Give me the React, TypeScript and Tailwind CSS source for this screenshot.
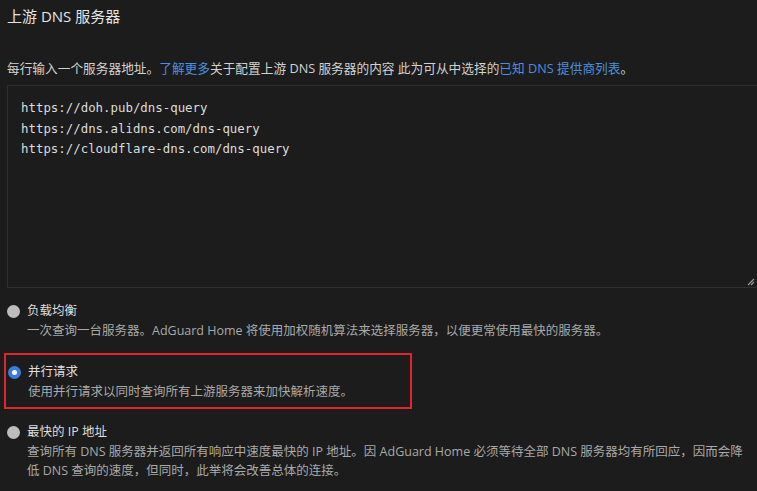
import React from "react";

const sans = { fontFamily: "'Open Sans','Noto Sans CJK SC',sans-serif" };

function Radio({ checked }: { checked?: boolean }) {
  if (checked) {
    return (
      <span className="mt-[3.5px] flex h-[13px] w-[13px] shrink-0 items-center justify-center rounded-full bg-[#3b7ddd]">
        <span className="h-[5px] w-[5px] rounded-full bg-white" />
      </span>
    );
  }
  return <span className="mt-[3.5px] h-[13px] w-[13px] shrink-0 rounded-full bg-[#bdbdbd]" />;
}

export default function App() {
  return (
    <div className="h-[491px] w-full overflow-hidden bg-[#1c1c1c] text-[12.5px]" style={sans}>
      <div className="pl-[7px] pt-[5px] text-[15px] leading-[22px] text-[#e4e4e4]">上游 DNS 服务器</div>
      <div className="mt-[31px] whitespace-nowrap pl-[7px] text-[12.7px] leading-[20px] text-[#d2d2d2]">
        每行输入一个服务器地址。<span className="text-[#4a8fde]">了解更多</span>关于配置上游 DNS 服务器的内容 此为可从中选择的
        <span className="text-[#4a8fde]">已知 DNS 提供商列表</span>。
      </div>
      <div className="relative ml-[7px] mt-[7px] h-[203px] w-[751px] border border-[#303030] bg-[#1c1c1c] px-[13px] pt-[12px]">
        <div className="text-[12.4px] leading-[20.5px] text-[#dcdcdc]" style={{ fontFamily: "'DejaVu Sans Mono',monospace" }}>
          <div>https://doh.pub/dns-query</div>
          <div>https://dns.alidns.com/dns-query</div>
          <div>https://cloudflare-dns.com/dns-query</div>
        </div>
        <svg className="absolute bottom-[1px] right-[2px]" width="8" height="8" viewBox="0 0 8 8">
          <path d="M7 1 L1 7 M7 4 L4 7" stroke="#9a9a9a" strokeWidth="1.2" />
        </svg>
      </div>

      <div className="mt-[13px] flex gap-[7px] pl-[7px]">
        <Radio />
        <div>
          <div className="leading-[20px] text-[#dedede]">负载均衡</div>
          <div className="leading-[20px] text-[#a9a9a9]">
            一次查询一台服务器。AdGuard Home 将使用加权随机算法来选择服务器，以便更常使用最快的服务器。
          </div>
        </div>
      </div>

      <div className="ml-[4px] mt-[12px] w-[408px] border-2 border-[#e0262c] pb-[5px] pl-[1px] pt-[7px]">
        <div className="flex gap-[7px] pl-[1px]">
          <Radio checked />
          <div>
            <div className="leading-[20px] text-[#dedede]">并行请求</div>
            <div className="leading-[20px] text-[#a9a9a9]">使用并行请求以同时查询所有上游服务器来加快解析速度。</div>
          </div>
        </div>
      </div>

      <div className="mt-[13px] flex gap-[7px] pl-[7px]">
        <Radio />
        <div>
          <div className="leading-[20px] text-[#dedede]">最快的 IP 地址</div>
          <div className="leading-[19px] text-[#a9a9a9]">
            <div className="whitespace-nowrap">
              查询所有 DNS 服务器并返回所有响应中速度最快的 IP 地址。因 AdGuard Home 必须等待全部 DNS 服务器均有所回应，因而会降
            </div>
            <div>低 DNS 查询的速度，但同时，此举将会改善总体的连接。</div>
          </div>
        </div>
      </div>
    </div>
  );
}
